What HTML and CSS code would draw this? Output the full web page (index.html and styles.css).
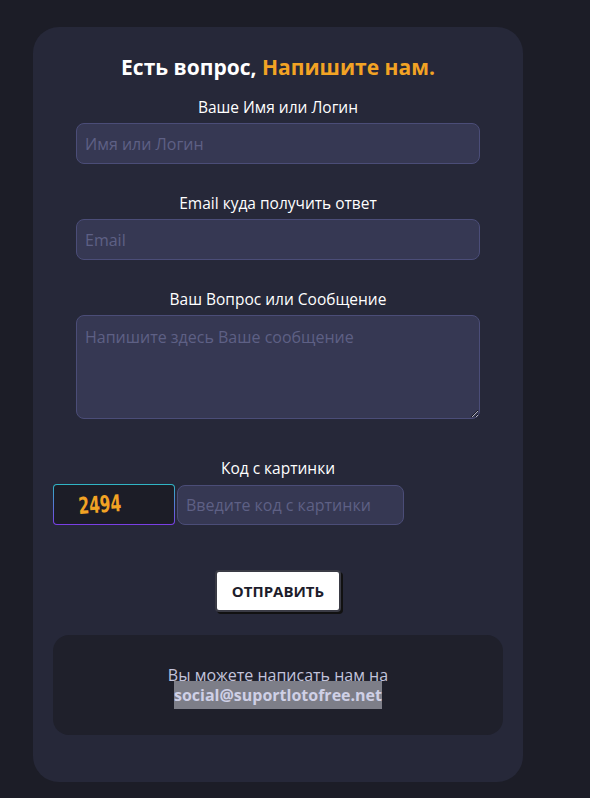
FILE: index.html
```html
<!DOCTYPE html>
<html lang="ru">
<head>
<meta charset="utf-8">
<title>Есть вопрос</title>
<link rel="stylesheet" href="styles.css">
</head>
<body>
<div class="card">
  <h1 class="title">Есть вопрос, <span class="accent">Напишите нам.</span></h1>
  <div class="field">
    <label class="label">Ваше Имя или Логин</label>
    <input class="input" type="text" placeholder="Имя или Логин">
  </div>
  <div class="field">
    <label class="label">Email куда получить ответ</label>
    <input class="input" type="text" placeholder="Email">
  </div>
  <div class="field">
    <label class="label">Ваш Вопрос или Сообщение</label>
    <textarea class="input textarea" placeholder="Напишите здесь Ваше сообщение"></textarea>
  </div>
  <div class="field captcha-field">
    <label class="label">Код с картинки</label>
    <div class="captcha-row">
      <div class="captcha-img">
        <svg width="70" height="39" viewBox="0 0 70 39"><text x="0" y="0" class="captcha-text" transform="translate(2 29) rotate(-4) scale(0.9 1.22)">2494</text></svg>
      </div>
      <input class="input captcha-input" type="text" placeholder="Введите код с картинки">
    </div>
  </div>
  <div class="btn-row"><button class="btn">ОТПРАВИТЬ</button></div>
  <div class="info">
    <p class="info-text">Вы можете написать нам на<br><span class="mail">social@suportlotofree.net</span></p>
  </div>
</div>
</body>
</html>
```
FILE: styles.css
```css
* { box-sizing: border-box; }
body {
  margin: 0;
  background: #1c1d27;
  font-family: "Open Sans", "Lato", sans-serif;
  color: #fff;
}
.card {
  margin: 27px 0 0 33px;
  width: 490px;
  height: 755px;
  background: #262839;
  border-radius: 26px;
  padding: 26px 20px 20px;
  display: flex;
  flex-direction: column;
}
.title {
  margin: 0;
  font-size: 21px;
  line-height: 28px;
  font-weight: 700;
  text-align: center;
  color: #fff;
}
.accent { color: #f2a324; }
.field {
  display: flex;
  flex-direction: column;
  align-items: center;
  margin-top: 16px;
}
.field + .field { margin-top: 29px; }
.field.captcha-field { margin-top: 39px; align-items: stretch; }
.label {
  font-size: 15.5px;
  line-height: 20px;
  margin-bottom: 6px;
  text-align: center;
  color: #fff;
}
.input {
  width: 404px;
  height: 41px;
  background: #363853;
  border: 1px solid #4b4d78;
  border-radius: 8px;
  padding: 0 8px;
  font-family: inherit;
  font-size: 16px;
  color: #fff;
  outline: none;
}
.input::placeholder { color: #5e6085; }
.textarea {
  height: 104px;
  padding: 10px 8px;
  resize: vertical;
  display: block;
}
.captcha-row {
  display: flex;
  gap: 2px;
}
.captcha-img {
  width: 122px;
  height: 41px;
  border-radius: 4px;
  padding: 1px;
  background: linear-gradient(180deg, #2fb6c4, #7a3ee6);
  position: relative;
}
.captcha-img::before {
  content: "";
  position: absolute;
  inset: 1px;
  background: #1c1d27;
  border-radius: 3px;
}
.captcha-img svg {
  position: relative;
  display: block;
  margin: 0 0 0 23px;
  overflow: visible;
}
.captcha-text {
  font-family: "DejaVu Sans Condensed", "DejaVu Sans", sans-serif;
  font-weight: 700;
  font-size: 19px;
  fill: #f2a324;
}
.captcha-input {
  width: 227px;
  height: 40px;
  margin-top: 1px;
  border-radius: 8px;
}
.btn-row {
  display: flex;
  justify-content: center;
  margin-top: 45px;
}
.btn {
  width: 126px;
  height: 42px;
  background: #fff;
  border: 2px solid #3a3b45;
  border-radius: 4px;
  box-shadow: 2px 2px 0 #111;
  font-family: inherit;
  font-weight: 700;
  font-size: 15px;
  color: #1d1d2b;
}
.info {
  margin-top: 23px;
  height: 100px;
  background: #1f202b;
  border-radius: 16px;
  display: flex;
  align-items: center;
  justify-content: center;
}
.info-text {
  margin: 0;
  text-align: center;
  font-size: 16px;
  line-height: 20px;
  color: #c3c4dc;
}
.mail {
  font-weight: 700;
  background: #7d7e88;
  color: #cfd0e6;
  padding: 3px 0;
}
```
